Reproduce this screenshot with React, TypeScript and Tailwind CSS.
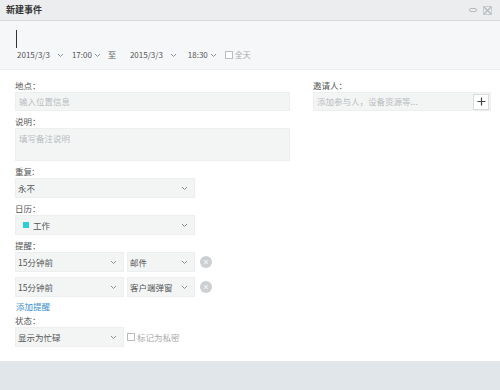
import React from 'react';

const font = "font-['Microsoft_YaHei','Noto_Sans_CJK_SC',sans-serif]";

const Chevron: React.FC<{ className?: string }> = ({ className = '' }) => (
  <svg width="7" height="5" viewBox="0 0 7 5" className={`shrink-0 ${className}`}>
    <path d="M1 1l2.5 2.5L6 1" fill="none" stroke="#8a9095" strokeWidth="1" />
  </svg>
);

const Select: React.FC<{ w: string; children: React.ReactNode }> = ({ w, children }) => (
  <div className={`${w} h-[20px] shrink-0 bg-[#f3f5f5] border border-[#eceeef] flex items-center justify-between pl-[2px] pr-[6px] text-[8.5px] text-[#555]`}>
    <div className="flex items-center gap-[4px]">{children}</div>
    <Chevron />
  </div>
);

const Remove: React.FC = () => (
  <div className="w-[12px] h-[12px] rounded-full bg-[#cdd0d2] flex items-center justify-center">
    <svg width="8" height="8" viewBox="0 0 8 8">
      <path d="M2.2 2.2l3.6 3.6M5.8 2.2l-3.6 3.6" stroke="#eef0f1" strokeWidth="1.1" />
    </svg>
  </div>
);

const Label: React.FC<{ children: React.ReactNode; first?: boolean }> = ({ children, first }) => (
  <div className={`text-[8.5px] text-[#555] h-[12px] leading-[12px] mb-[1px] ${first ? '' : 'mt-[4px]'}`}>{children}</div>
);

const Check: React.FC = () => (
  <span className="inline-block w-[8px] h-[8px] border border-[#b9bdc0] bg-white" />
);

export default function App() {
  return (
    <div className={`${font} w-[500px] h-[390px] bg-white flex flex-col`}>
      {/* title bar */}
      <div className="h-[21px] bg-[#ebedef] border-b border-[#d6dadd] flex items-center justify-between px-[6px]">
        <span className="text-[9px] text-[#333] font-semibold">新建事件</span>
        <div className="flex items-center gap-[6px] pr-[2px]">
          <svg width="8" height="6" viewBox="0 0 8 6">
            <rect x="0.5" y="1.5" width="7" height="3" rx="1.5" fill="none" stroke="#b5b9bc" />
          </svg>
          <svg width="9" height="9" viewBox="0 0 9 9">
            <path d="M1 1l7 7M8 1l-7 7" stroke="#b5b9bc" strokeWidth="1.4" />
            <rect x="0.5" y="0.5" width="8" height="8" fill="none" stroke="#c8cbce" />
          </svg>
        </div>
      </div>

      {/* header: title + time */}
      <div className="h-[49px] bg-[#f5f7f8] border-b border-[#eceff1] px-[16px] pt-[9px]">
        <div className="w-[1px] h-[18px] bg-[#333]" />
        <div className="flex items-center mt-[2px] h-[10px] text-[8px] text-[#555]">
          <span className="ml-[1px]">2015/3/3</span>
          <Chevron className="ml-[7px]" />
          <span className="ml-[8px]">17:00</span>
          <Chevron className="ml-[2px]" />
          <span className="ml-[7px]">至</span>
          <span className="ml-[14px]">2015/3/3</span>
          <Chevron className="ml-[7px]" />
          <span className="ml-[11px]">18:30</span>
          <Chevron className="ml-[2px]" />
          <span className="ml-[8px] flex items-center gap-[2px] text-[#aaa]">
            <Check />
            全天
          </span>
        </div>
      </div>

      {/* body */}
      <div className="flex-1 flex pl-[15px] pr-[9px] pt-[9px]">
        <div className="w-[275px] shrink-0 flex flex-col">
          <Label first>地点：</Label>
          <div className="h-[19px] bg-[#f3f5f5] border border-[#eceeef] px-[3px] flex items-center text-[8.5px] text-[#b8bcbf]">
            输入位置信息
          </div>
          <Label>说明：</Label>
          <div className="h-[33px] bg-[#f3f5f5] border border-[#eceeef] px-[3px] pt-[3px] text-[8.5px] leading-[12px] text-[#b8bcbf]">
            填写备注说明
          </div>
          <Label>重复:</Label>
          <Select w="w-[180px]">永不</Select>
          <Label>日历：</Label>
          <Select w="w-[180px]">
            <span className="ml-[5px] w-[6px] h-[6px] bg-[#2ecfd4]" />
            <span>工作</span>
          </Select>
          <Label>提醒：</Label>
          <div className="flex items-center gap-[3px]">
            <Select w="w-[109px]">15分钟前</Select>
            <Select w="w-[68px]">邮件</Select>
            <div className="ml-[2px]"><Remove /></div>
          </div>
          <div className="flex items-center gap-[3px] mt-[5px]">
            <Select w="w-[109px]">15分钟前</Select>
            <Select w="w-[68px]">客户端弹窗</Select>
            <div className="ml-[2px]"><Remove /></div>
          </div>
          <div className="mt-[3px] h-[12px] text-[8.5px] leading-[12px] text-[#3a8fd0] ml-[1px]">添加提醒</div>
          <div className="mt-[2px] h-[12px] mb-[1px] text-[8.5px] leading-[12px] text-[#555]">状态：</div>
          <div className="flex items-center gap-[3px]">
            <Select w="w-[109px]">显示为忙碌</Select>
            <span className="flex items-center gap-[2px] text-[8.5px] text-[#aaa]">
              <Check />
              标记为私密
            </span>
          </div>
        </div>

        <div className="ml-[23px] flex-1 flex flex-col">
          <Label first>邀请人：</Label>
          <div className="h-[19px] bg-[#f3f5f5] border border-[#eceeef] pl-[3px] pr-[1px] flex items-center justify-between text-[8.5px] text-[#b8bcbf]">
            <span>添加参与人，设备资源等...</span>
            <div className="w-[16px] h-[16px] bg-white border border-[#d8dbdd] flex items-center justify-center">
              <svg width="9" height="9" viewBox="0 0 9 9">
                <path d="M4.5 0.5v8M0.5 4.5h8" stroke="#444" strokeWidth="1.2" />
              </svg>
            </div>
          </div>
        </div>
      </div>

      {/* footer */}
      <div className="h-[29px] bg-[#e0e6e9]" />
    </div>
  );
}
